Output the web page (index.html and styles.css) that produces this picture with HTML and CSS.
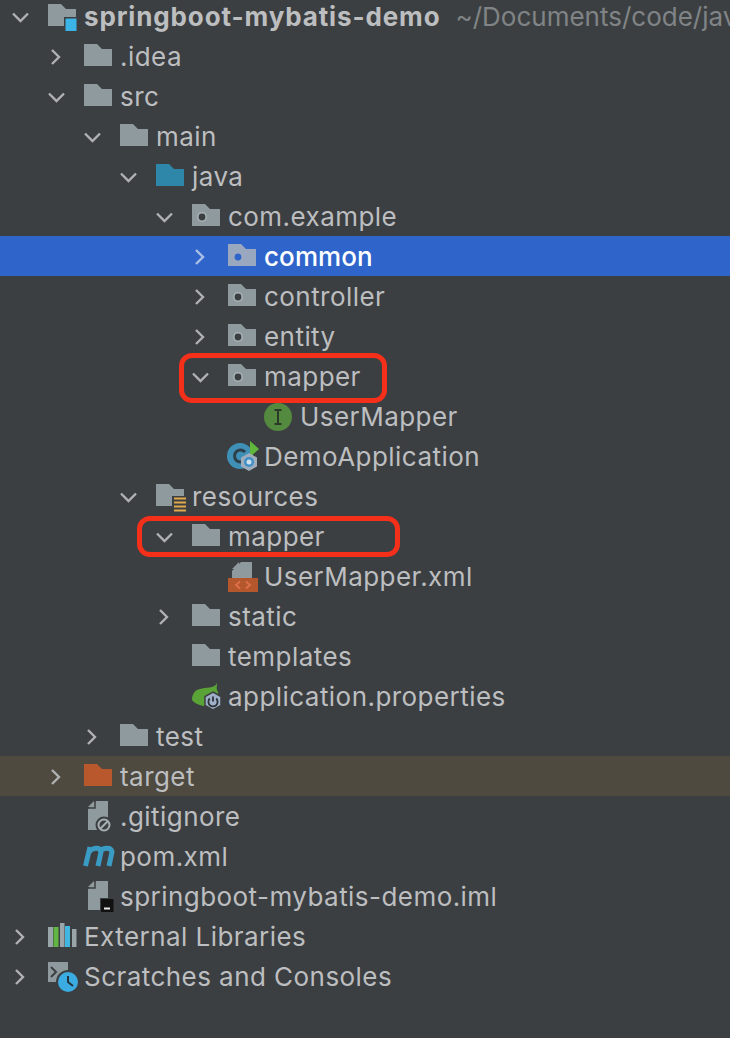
FILE: index.html
```html
<!DOCTYPE html>
<html lang="en">
<head>
    <meta charset="UTF-8">
    <meta name="viewport" content="width=device-width, initial-scale=1.0">
    <title>Project tree</title>
    <link rel="stylesheet" href="styles.css">
</head>
<body>
    <!-- shared icons, each one fills a 36x40 slot -->
    <svg class="sprite" xmlns="http://www.w3.org/2000/svg">
        <symbol id="down" viewBox="0 0 24 40"><path d="M5 16.5l7.500 7.500 7.500-7.500" fill="none" stroke="currentColor" stroke-width="2.400"/></symbol>
        <symbol id="right" viewBox="0 0 24 40"><path d="M8 13l7 7-7 7" fill="none" stroke="currentColor" stroke-width="2.400"/></symbol>
        <symbol id="folder" viewBox="0 0 36 40"><path d="M0 7h13l5 5h10v17H0z" fill="currentColor"/></symbol>
        <symbol id="package" viewBox="0 0 36 40"><path d="M0 7h13l5 5h10v17H0z" fill="currentColor"/><circle cx="10" cy="20" r="5" fill="#a9b3b7"/><circle cx="10" cy="20" r="3.400" fill="#3c3f41"/></symbol>
        <symbol id="file" viewBox="0 0 36 40"><path d="M12 4h12v29H4V12z" fill="#8f9a9f"/><path d="M4 10l6-6v6z" fill="#8f9a9f"/><path d="M11 4v7H4" fill="none" stroke="#3c3f41" stroke-width="1.500"/></symbol>
    </svg>

    <div class="tree">
        <div class="row d0">
            <svg class="chev"><use href="#down"/></svg>
            <svg class="icon" viewBox="0 0 36 40">
                <path d="M0 7h13l5 5h10v17H0z" fill="#8f9a9f"/>
                <rect x="16" y="20" width="14" height="16" fill="#3c3f41"/>
                <rect x="17.500" y="21.500" width="11" height="12.500" fill="#3bb4e8"/>
            </svg>
            <span class="name root">springboot-mybatis-demo</span>
            <span class="path">~/Documents/code/java</span>
        </div>
        <div class="row d1">
            <svg class="chev"><use href="#right"/></svg>
            <svg class="icon grey"><use href="#folder"/></svg>
            <span class="name">.idea</span>
        </div>
        <div class="row d1">
            <svg class="chev"><use href="#down"/></svg>
            <svg class="icon grey"><use href="#folder"/></svg>
            <span class="name">src</span>
        </div>
        <div class="row d2">
            <svg class="chev"><use href="#down"/></svg>
            <svg class="icon grey"><use href="#folder"/></svg>
            <span class="name">main</span>
        </div>
        <div class="row d3">
            <svg class="chev"><use href="#down"/></svg>
            <svg class="icon teal"><use href="#folder"/></svg>
            <span class="name">java</span>
        </div>
        <div class="row d4">
            <svg class="chev"><use href="#down"/></svg>
            <svg class="icon grey"><use href="#package"/></svg>
            <span class="name">com.example</span>
        </div>
        <div class="row d5 selected">
            <svg class="chev"><use href="#right"/></svg>
            <svg class="icon" viewBox="0 0 36 40">
                <path d="M0 7h13l5 5h10v17H0z" fill="#9aa8bf"/>
                <circle cx="10" cy="20" r="3.400" fill="#2f65ca"/>
            </svg>
            <span class="name">common</span>
        </div>
        <div class="row d5">
            <svg class="chev"><use href="#right"/></svg>
            <svg class="icon grey"><use href="#package"/></svg>
            <span class="name">controller</span>
        </div>
        <div class="row d5">
            <svg class="chev"><use href="#right"/></svg>
            <svg class="icon grey"><use href="#package"/></svg>
            <span class="name">entity</span>
        </div>
        <div class="row d5">
            <div class="mark mark-package"></div>
            <svg class="chev"><use href="#down"/></svg>
            <svg class="icon grey"><use href="#package"/></svg>
            <span class="name">mapper</span>
        </div>
        <div class="row d6">
            <div class="chev"></div>
            <svg class="icon" viewBox="0 0 36 40">
                <circle cx="14" cy="20" r="14" fill="#548a3f"/>
                <path d="M10.500 13h7M10.500 27h7M14 13v14" fill="none" stroke="#2a3a26" stroke-width="2"/>
            </svg>
            <span class="name">UserMapper</span>
        </div>
        <div class="row d5">
            <div class="chev"></div>
            <svg class="icon" viewBox="0 0 36 40">
                <circle cx="12" cy="19" r="13" fill="#3f90b6"/>
                <path d="M17 15a6 6 0 1 0 0 8" fill="none" stroke="#2f3f4a" stroke-width="3"/>
                <path d="M22 4l9 8-9 8z" fill="#5fb83c"/>
                <path d="M21 16l8 4.500v9L21 34l-8-4.500v-9z" fill="#9fadbd"/>
                <circle cx="21" cy="25" r="5" fill="#3f90c6"/>
                <circle cx="21" cy="25" r="2.500" fill="#cfe0ee"/>
            </svg>
            <span class="name">DemoApplication</span>
        </div>
        <div class="row d3">
            <svg class="chev"><use href="#down"/></svg>
            <svg class="icon" viewBox="0 0 36 40">
                <path d="M0 7h13l5 5h10v17H0z" fill="#8f9a9f"/>
                <rect x="16" y="19" width="16" height="17" fill="#3c3f41"/>
                <path d="M18 21.500h12M18 25.500h12M18 29.500h12M18 33.500h12" stroke="#e0a84c" stroke-width="2.200"/>
            </svg>
            <span class="name">resources</span>
        </div>
        <div class="row d4">
            <div class="mark mark-folder"></div>
            <svg class="chev"><use href="#down"/></svg>
            <svg class="icon grey"><use href="#folder"/></svg>
            <span class="name">mapper</span>
        </div>
        <div class="row d5">
            <div class="chev"></div>
            <svg class="icon" viewBox="0 0 36 40">
                <path d="M13 5h11v16H4v-7z" fill="#8f9a9f"/>
                <path d="M4 12l7-7v7z" fill="#8f9a9f"/>
                <rect y="21" width="30" height="14" fill="#b5572d"/>
                <path d="M12 24.500L8 28l4 3.500M18 24.500l4 3.500-4 3.500" fill="none" stroke="#e0704a" stroke-width="1.800"/>
            </svg>
            <span class="name">UserMapper.xml</span>
        </div>
        <div class="row d4">
            <svg class="chev"><use href="#right"/></svg>
            <svg class="icon grey"><use href="#folder"/></svg>
            <span class="name">static</span>
        </div>
        <div class="row d4">
            <div class="chev"></div>
            <svg class="icon grey"><use href="#folder"/></svg>
            <span class="name">templates</span>
        </div>
        <div class="row d4">
            <div class="chev"></div>
            <svg class="icon" viewBox="0 0 36 40">
                <path d="M25 6c0 4-1 6 1 9 1 4-3 8-7 10-2 3-5 4-8 4-4-1-9-3-11-6 0-6 3-10 8-11 6-2 14 0 17-6z" fill="#5aa337"/>
                <path d="M21 15l8 4.500v9L21 33l-8-4.500v-9z" fill="#9fb0c8" stroke="#3c3f41" stroke-width="1.500"/>
                <path d="M17.800 21.500a4.600 4.600 0 1 0 6.400 0M21 19.500v5" fill="none" stroke="#2c3136" stroke-width="1.800"/>
            </svg>
            <span class="name">application.properties</span>
        </div>
        <div class="row d2">
            <svg class="chev"><use href="#right"/></svg>
            <svg class="icon grey"><use href="#folder"/></svg>
            <span class="name">test</span>
        </div>
        <div class="row d1 excluded">
            <svg class="chev"><use href="#right"/></svg>
            <svg class="icon orange"><use href="#folder"/></svg>
            <span class="name">target</span>
        </div>
        <div class="row d1">
            <div class="chev"></div>
            <svg class="icon" viewBox="0 0 36 40">
                <use href="#file" width="36" height="40"/>
                <circle cx="20" cy="28" r="8.500" fill="#3c3f41"/>
                <circle cx="20" cy="28" r="5.500" fill="none" stroke="#a5afb4" stroke-width="2"/>
                <path d="M16 32l8-8" stroke="#a5afb4" stroke-width="2"/>
            </svg>
            <span class="name">.gitignore</span>
        </div>
        <div class="row d1">
            <div class="chev"></div>
            <svg class="icon" viewBox="0 0 36 40">
                <path d="M1.500 29L6 10M5 15c3-4 11-6 12 0l-3 14M15 15c3-4 12-6 13 0l-3 14" fill="none" stroke="#3a9cc4" stroke-width="5"/>
            </svg>
            <span class="name">pom.xml</span>
        </div>
        <div class="row d1">
            <div class="chev"></div>
            <svg class="icon" viewBox="0 0 36 40">
                <use href="#file" width="36" height="40"/>
                <rect x="16" y="21" width="14" height="15" fill="#3c3f41"/>
                <rect x="17" y="22" width="12.500" height="13" fill="#111"/>
                <rect x="20" y="30.500" width="6" height="2" fill="#e8e8e8"/>
            </svg>
            <span class="name">springboot-mybatis-demo.iml</span>
        </div>
        <div class="row d0">
            <svg class="chev"><use href="#right"/></svg>
            <svg class="icon" viewBox="0 0 36 40">
                <rect y="10" width="5" height="20" fill="#9aa5aa"/>
                <rect x="5.500" y="10" width="5" height="20" fill="#62b543"/>
                <rect x="12" y="6" width="4.500" height="24" fill="#9aa5aa"/>
                <rect x="17" y="9" width="5" height="21" fill="#40b6e0"/>
                <rect x="24" y="12" width="4.500" height="18" fill="#9aa5aa"/>
            </svg>
            <span class="name">External Libraries</span>
        </div>
        <div class="row d0">
            <svg class="chev"><use href="#right"/></svg>
            <svg class="icon" viewBox="0 0 36 40">
                <rect y="5" width="20" height="20" fill="#8f9a9f"/>
                <path d="M3 10l5 5-5 5" fill="none" stroke="#3c3f41" stroke-width="2"/>
                <circle cx="20" cy="25" r="12" fill="#3c3f41"/>
                <circle cx="20" cy="25" r="10" fill="#3bace2"/>
                <path d="M20 19v6l5 4" fill="none" stroke="#24343f" stroke-width="2"/>
            </svg>
            <span class="name">Scratches and Consoles</span>
        </div>
    </div>
</body>
</html>
```

FILE: styles.css
```css
html, body {
    margin: 0;
    padding: 0;
    height: 100%;
    overflow: hidden;
    background: #3c3f41;
}

.sprite {
    display: none;
}

.tree {
    margin-top: -3px;
    font-family: Inter, "Liberation Sans", sans-serif;
    font-size: 26px;
    color: #bcbec0;
}

.row {
    position: relative;
    display: flex;
    align-items: center;
    box-sizing: border-box;
    height: 40px;
    white-space: nowrap;
}

.d0 { padding-left: 8px; }
.d1 { padding-left: 44px; }
.d2 { padding-left: 80px; }
.d3 { padding-left: 116px; }
.d4 { padding-left: 152px; }
.d5 { padding-left: 188px; }
.d6 { padding-left: 224px; }

.chev {
    flex: none;
    width: 24px;
    height: 40px;
    margin-right: 16px;
    color: #afb1b3;
}

.icon {
    flex: none;
    width: 36px;
    height: 40px;
    overflow: visible;
}

.grey { color: #8f9a9f; }
.teal { color: #2e86a8; }
.orange { color: #b9582c; }

.name {
    margin-bottom: 2px;
    letter-spacing: 0.45px;
}

.root {
    font-weight: 700;
    letter-spacing: 0.87px;
}

.path {
    margin-left: 15px;
    margin-bottom: 2px;
    color: #808486;
}

/* highlighted rows sit a pixel higher than their text */
.selected, .excluded {
    margin: -1px 0 1px;
    padding-top: 2px;
}

.selected {
    background: #2f65ca;
    color: #fff;
}

.selected .name {
    font-weight: 500;
    letter-spacing: 0.1px;
}

.selected .chev {
    color: #a9bfe6;
}

.excluded {
    background: #4e4a3f;
}

/* red boxes drawn over the tree */
.mark {
    position: absolute;
    box-sizing: border-box;
    border: 5px solid #f5301a;
    border-radius: 13px;
}

.mark-package {
    left: 179px;
    top: -4px;
    width: 208px;
    height: 50px;
}

.mark-folder {
    left: 137px;
    top: -1px;
    width: 263px;
    height: 41px;
}
```
